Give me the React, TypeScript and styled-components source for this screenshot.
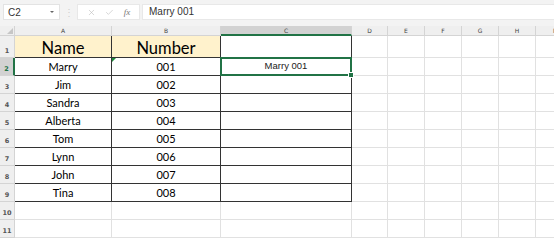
import React from 'react';
import styled, { createGlobalStyle, css } from 'styled-components';
import { X, Check } from 'lucide-react';

const GlobalStyle = createGlobalStyle`
  html, body {
    margin: 0;
    padding: 0;
    background: #ffffff;
  }
  body {
    font-family: 'Lato', 'Open Sans', sans-serif;
  }
`;

const GRID = '#e1e1e1';
const DARK = '#333333';
const GREEN = '#217346';

const SSheet = styled.div`
  width: 554px;
  height: 241px;
  overflow: hidden;
  background: #ffffff;
`;

const SFormulaBar = styled.div`
  height: 26px;
  display: flex;
  align-items: flex-start;
  padding-top: 4px;
  box-sizing: border-box;
  background: #f3f3f3;
`;

const SNameBox = styled.div`
  margin-left: 3px;
  width: 57px;
  height: 16px;
  box-sizing: border-box;
  background: #ffffff;
  border: 1px solid #e3e3e3;
  display: flex;
  align-items: center;
  justify-content: space-between;
  padding: 0 5px 0 4px;
  font-family: 'Liberation Sans', Arial, sans-serif;
  font-size: 10px;
  color: #333;
`;

const SCaret = styled.span`
  width: 0;
  height: 0;
  border-left: 2px solid transparent;
  border-right: 2px solid transparent;
  border-top: 2px solid #666;
`;

const SDots = styled.span`
  width: 17px;
  text-align: center;
  color: #cfcfcf;
  font-size: 10px;
  line-height: 16px;
`;

const SIconBox = styled.div`
  width: 63px;
  height: 16px;
  box-sizing: border-box;
  background: #ffffff;
  border: 1px solid #e8e8e8;
  display: flex;
  align-items: center;
  justify-content: space-around;
  padding: 0 4px 0 4px;
  color: #b9b9b9;
`;

const SFx = styled.span`
  font-family: 'Liberation Serif', serif;
  font-style: italic;
  font-size: 9px;
  color: #777;
`;

const SFormulaInput = styled.div`
  flex: 1;
  margin-left: 2px;
  height: 16px;
  box-sizing: border-box;
  background: #ffffff;
  border: 1px solid #e8e8e8;
  border-right: none;
  padding-left: 6px;
  font-family: 'Liberation Sans', Arial, sans-serif;
  font-size: 10px;
  line-height: 14px;
  color: #333;
`;

const SGrid = styled.div`
  display: grid;
  grid-template-columns: 15px 97px 109px 131px 36px 37px 37px 37px 37px 37px;
  grid-template-rows: 10px 22px repeat(11, 18px);
`;

const SHead = styled.div<{ $selected?: boolean; $side?: 'col' | 'row' }>`
  box-sizing: border-box;
  background: ${({ $selected }) => ($selected ? '#d2d2d2' : '#efefef')};
  border-right: 1px solid #d4d4d4;
  border-bottom: 1px solid #d4d4d4;
  font-family: 'DejaVu Sans', sans-serif;
  font-size: 6px;
  color: #444;
  display: flex;
  justify-content: center;
  align-items: center;
  ${({ $side }) =>
    $side === 'row' &&
    css`
      align-items: flex-end;
      padding-bottom: 2px;
      font-weight: bold;
      font-size: 6.5px;
      color: #555;
    `}
  ${({ $selected, $side }) =>
    $selected &&
    $side === 'col' &&
    css`
      border-bottom: 2px solid ${GREEN};
    `}
  ${({ $selected, $side }) =>
    $selected &&
    $side === 'row' &&
    css`
      border-right: 2px solid ${GREEN};
      color: ${GREEN};
    `}
`;

const SCorner = styled.div`
  position: relative;
  background: #efefef;
  border-right: 1px solid #d4d4d4;
  border-bottom: 1px solid #d4d4d4;
  box-sizing: border-box;

  &::after {
    content: '';
    position: absolute;
    right: 1px;
    bottom: 1px;
    border-left: 6px solid transparent;
    border-bottom: 6px solid #c6c6c6;
  }
`;

const SCell = styled.div<{
  $bg?: string;
  $right?: string;
  $bottom?: string;
  $size?: number;
  $mark?: boolean;
  $active?: boolean;
}>`
  position: relative;
  box-sizing: border-box;
  background: ${({ $bg }) => $bg || '#ffffff'};
  border-right: 1px solid ${({ $right }) => $right || GRID};
  border-bottom: 1px solid ${({ $bottom }) => $bottom || GRID};
  display: flex;
  justify-content: center;
  align-items: flex-end;
  padding-bottom: ${({ $size }) => ($size && $size > 14 ? 0 : 2)}px;
  font-family: 'Lato', 'Open Sans', sans-serif;
  font-size: ${({ $size }) => $size || 11}px;
  line-height: 1.1;
  color: #000;
  white-space: nowrap;

  ${({ $mark }) =>
    $mark &&
    css`
      &::before {
        content: '';
        position: absolute;
        top: 0;
        left: 0;
        border-top: 4px solid #1e8a3c;
        border-right: 4px solid transparent;
      }
    `}

  ${({ $active }) =>
    $active &&
    css`
      font-family: 'Liberation Sans', Arial, sans-serif;
      font-size: 9.5px;
      align-items: center;
      padding-bottom: 0;
      color: #222;

      &::after {
        content: '';
        position: absolute;
        top: -1px;
        left: -1px;
        right: -1px;
        bottom: -1px;
        border: 2px solid ${GREEN};
      }

      &::before {
        content: '';
        position: absolute;
        right: -3px;
        bottom: -3px;
        width: 4px;
        height: 4px;
        background: ${GREEN};
        border: 1px solid #ffffff;
        z-index: 1;
      }
    `}
`;

const columns = ['A', 'B', 'C', 'D', 'E', 'F', 'G', 'H', 'I'];

const people = [
  ['Marry', '001'],
  ['Jim', '002'],
  ['Sandra', '003'],
  ['Alberta', '004'],
  ['Tom', '005'],
  ['Lynn', '006'],
  ['John', '007'],
  ['Tina', '008'],
];

function FormulaBar() {
  return (
    <SFormulaBar>
      <SNameBox>
        <span>C2</span>
        <SCaret />
      </SNameBox>
      <SDots>⋮</SDots>
      <SIconBox>
        <X size={9} strokeWidth={1.5} />
        <Check size={9} strokeWidth={1.5} />
        <SFx>fx</SFx>
      </SIconBox>
      <SFormulaInput>Marry 001</SFormulaInput>
    </SFormulaBar>
  );
}

export default function App() {
  const rows: React.ReactNode[] = [];

  // header row
  rows.push(<SCorner key='corner' />);
  columns.forEach((c) => {
    rows.push(
      <SHead key={`h-${c}`} $side='col' $selected={c === 'C'}>
        {c}
      </SHead>,
    );
  });

  for (let r = 1; r <= 11; r++) {
    rows.push(
      <SHead key={`r-${r}`} $side='row' $selected={r === 2}>
        {r}
      </SHead>,
    );
    const inTable = r <= 9;
    columns.forEach((c, ci) => {
      const dark = inTable && ci <= 2;
      let text = '';
      let size: number | undefined;
      if (r === 1 && c === 'A') text = 'Name';
      if (r === 1 && c === 'B') text = 'Number';
      if (r === 1) size = 16.5;
      if (r >= 2 && r <= 9 && c === 'A') text = people[r - 2][0];
      if (r >= 2 && r <= 9 && c === 'B') text = people[r - 2][1];
      if (r === 2 && c === 'C') text = 'Marry 001';
      rows.push(
        <SCell
          key={`${c}${r}`}
          $bg={r === 1 && ci <= 1 ? '#fff2cc' : undefined}
          $right={dark ? DARK : undefined}
          $bottom={dark ? DARK : undefined}
          $size={size}
          $mark={r === 2 && c === 'B'}
          $active={r === 2 && c === 'C'}
        >
          {text}
        </SCell>,
      );
    });
  }

  return (
    <>
      <GlobalStyle />
      <SSheet>
        <FormulaBar />
        <SGrid>{rows}</SGrid>
      </SSheet>
    </>
  );
}
